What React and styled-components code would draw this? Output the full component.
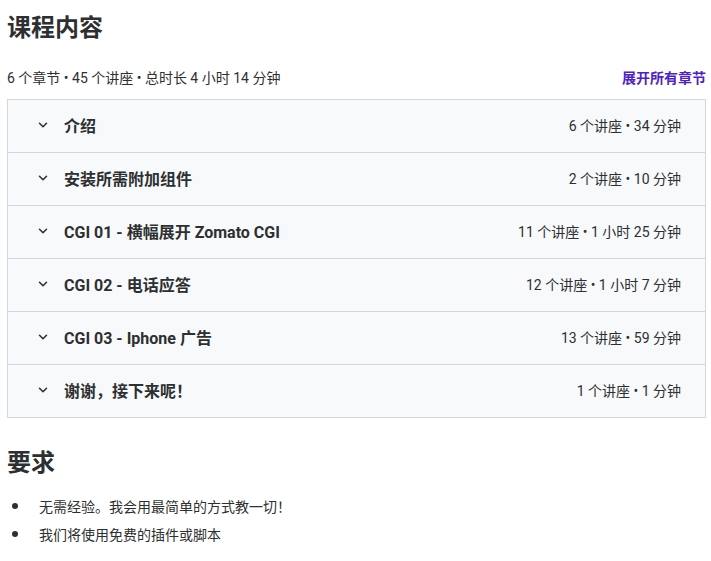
import React from 'react';
import styled, { createGlobalStyle } from 'styled-components';

const GlobalStyle = createGlobalStyle`
  body {
    margin: 0;
    background: #fff;
    font-family: Roboto, "Noto Sans CJK SC", sans-serif;
    color: #2d2f31;
  }
`;

const Page = styled.div`
  padding: 0 5px 0 7px;
  width: 699px;
`;

const Heading = styled.h2`
  margin: 0;
  font-size: 24px;
  font-weight: 700;
  line-height: 32px;
  color: #2d2f31;
  padding-top: ${props => props.top}px;
`;

const SummaryRow = styled.div`
  display: flex;
  justify-content: space-between;
  align-items: center;
  height: 22px;
  margin-top: 22px;
  margin-bottom: 11px;
  font-size: 14px;
`;

const ExpandLink = styled.button`
  border: none;
  background: none;
  padding: 0;
  font-family: inherit;
  font-size: 14px;
  font-weight: 700;
  color: #5022c3;
  cursor: pointer;
`;

const Accordion = styled.div`
  border: 1px solid #d1d7dc;
  border-bottom: none;
`;

const Section = styled.div`
  box-sizing: border-box;
  display: flex;
  align-items: center;
  height: 53px;
  background: #f7f9fa;
  border-bottom: 1px solid #d1d7dc;
  padding: 0 24px 3px 28px;
`;

const Chevron = styled.svg`
  width: 14px;
  height: 14px;
  flex-shrink: 0;
  margin-right: 14px;
`;

const SectionTitle = styled.div`
  flex: 1;
  font-size: 16px;
  font-weight: 700;
  color: #2d2f31;
`;

const SectionMeta = styled.div`
  font-size: 14px;
  color: #2d2f31;
`;

const List = styled.ul`
  list-style: none;
  margin: 13px 0 0;
  padding: 0;
`;

const Item = styled.li`
  display: flex;
  align-items: center;
  height: 28px;
  font-size: 14px;

  &::before {
    content: '';
    width: 6px;
    height: 6px;
    border-radius: 50%;
    background: #2d2f31;
    margin: 0 21px 0 5px;
  }
`;

const sections = [
  { title: '介绍', meta: '6 个讲座 • 34 分钟' },
  { title: '安装所需附加组件', meta: '2 个讲座 • 10 分钟' },
  { title: 'CGI 01 - 横幅展开 Zomato CGI', meta: '11 个讲座 • 1 小时 25 分钟' },
  { title: 'CGI 02 - 电话应答', meta: '12 个讲座 • 1 小时 7 分钟' },
  { title: 'CGI 03 - Iphone 广告', meta: '13 个讲座 • 59 分钟' },
  { title: '谢谢，接下来呢！', meta: '1 个讲座 • 1 分钟' },
];

const requirements = [
  '无需经验。我会用最简单的方式教一切！',
  '我们将使用免费的插件或脚本',
];

export default function App() {
  return (
    <>
      <GlobalStyle />
      <Page>
        <Heading top={12}>课程内容</Heading>
        <SummaryRow>
          <span>6 个章节 • 45 个讲座 • 总时长 4 小时 14 分钟</span>
          <ExpandLink>展开所有章节</ExpandLink>
        </SummaryRow>
        <Accordion>
          {sections.map(s => (
            <Section key={s.title}>
              <Chevron viewBox="0 0 24 24" fill="none" stroke="#2d2f31" strokeWidth="2.6" strokeLinecap="round" strokeLinejoin="round">
                <path d="M6 9l6 6 6-6" />
              </Chevron>
              <SectionTitle>{s.title}</SectionTitle>
              <SectionMeta>{s.meta}</SectionMeta>
            </Section>
          ))}
        </Accordion>
        <Heading top={29}>要求</Heading>
        <List>
          {requirements.map(r => <Item key={r}>{r}</Item>)}
        </List>
      </Page>
    </>
  );
}
